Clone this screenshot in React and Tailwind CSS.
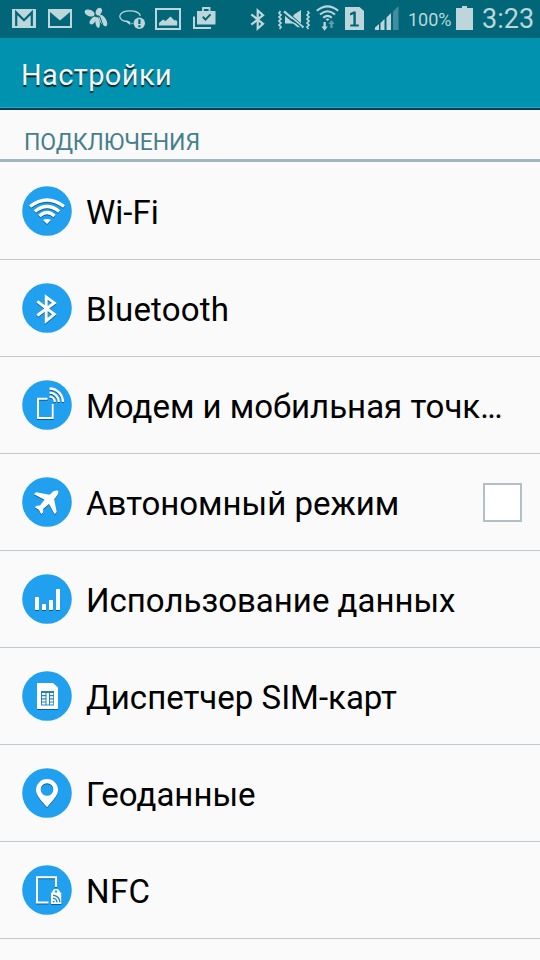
import React from 'react';
import clsx from 'clsx';

const StatusIcon = ({ x, width, className, children }) => (
  <svg
    width={width}
    height="38"
    viewBox={`${x} 0 ${width} 38`}
    fill="#bcd6dc"
    className={clsx('shrink-0', className)}
  >
    {children}
  </svg>
);

const StatusBar = () => (
  <div className="flex h-[38px] items-center overflow-hidden bg-[#006678] pl-3 text-[#bcd6dc]">
    {/* notifications */}
    <StatusIcon x={12} width={24}>
      <path d="M12 9h24v19H12z" />
      <path d="M16.2 26V12.500L24 20.300l7.800-7.800V26" fill="none" stroke="#006678" strokeWidth="2.200" />
    </StatusIcon>
    <StatusIcon x={48} width={24} className="ml-3">
      <path d="M48 9h24v19H48z" />
      <path d="M50 12l10 8.500L70 12v14H50z" fill="#006678" />
    </StatusIcon>
    <StatusIcon x={84} width={24} className="ml-3">
      <ellipse cx="89.6" cy="13" rx="5.2" ry="3.2" transform="rotate(22 89.6 13)" />
      <ellipse cx="98.8" cy="11.6" rx="2.9" ry="4" transform="rotate(25 98.8 11.6)" />
      <ellipse cx="93" cy="20.5" rx="2.4" ry="4.5" transform="rotate(38 93 20.5)" />
      <ellipse cx="97.6" cy="22.500" rx="2.200" ry="5.500" transform="rotate(-8 97.6 22.3)" />
      <ellipse cx="103" cy="20.500" rx="3.200" ry="6.500" transform="rotate(-30 103 20.5)" />
      <path d="M99.500 16l4 11" stroke="#006678" strokeWidth="1" />
    </StatusIcon>
    <StatusIcon x={118} width={28} className="ml-2.5">
      <path
        d="M128 21.5C122 21.3 119.6 18.6 119.8 16c.4-3.2 4.8-5.2 10-5.2 5 0 9.600 1.600 10.600 5"
        fill="none"
        stroke="#bcd6dc"
        strokeWidth="1.3"
      />
      <path d="M124.500 20.500l5 .8 1 1.400-.4 2.300c-1.600-1.300-3.400-2.500-5.600-4.500z" />
      <circle cx="132" cy="23.500" r=".7" />
      <circle cx="139.300" cy="23.200" r="5.700" />
      <path d="M138.300 19.300h2.200v4.700h-2.200zM138.300 25.200h2.200v2h-2.200z" fill="#006678" />
    </StatusIcon>
    <StatusIcon x={155} width={26} className="ml-[9px]">
      <path d="M155 8h26v22h-26zM157 10v18h22V10z" fillRule="evenodd" />
      <path d="M159 25.500v-2.500l4-3.500 2.500 1.500 5-4.500 4 4 1.500-.5 1.200 1.500v4z" />
    </StatusIcon>
    <StatusIcon x={193} width={23} className="ml-3">
      <path d="M193 16.500h2V27h16v2h-18z" />
      <path d="M197 11h18.500v13.500H197z" />
      <path d="M203 11.500V8h6.500v3.500" fill="none" stroke="#bcd6dc" strokeWidth="1.800" />
      <path d="M202.800 16.800l2.700 2.800 5-5.200" fill="none" stroke="#006678" strokeWidth="2" />
    </StatusIcon>

    {/* system */}
    <StatusIcon x={250} width={16} className="ml-[34px]">
      <path
        d="M251.300 14.300L263 23.800l-5.300 4.700V10.500l5.300 4.700-11.700 9.500"
        fill="none"
        stroke="#bcd6dc"
        strokeWidth="2.200"
      />
    </StatusIcon>
    <StatusIcon x={278} width={32} className="ml-3">
      <path
        d="M280.500 11l-1.500 2 2 2-2 2 2 2-2 2 2 2-2 2 2 2-1.500 2M307.500 11l1.500 2-2 2 2 2-2 2 2 2-2 2 2 2-2 2 1.500 2"
        fill="none"
        stroke="#bcd6dc"
        strokeWidth="1.700"
      />
      <path d="M285 14.500l10 9H285zM294 14.500l7-4.500v13.500l-8-7z" />
      <path d="M284.500 12.500l19 16" stroke="#006678" strokeWidth="4.500" />
      <path d="M284 11.300l19.500 16.200" stroke="#bcd6dc" strokeWidth="2.200" />
      <path d="M290 21l7.500 6.300h3.500v-2" />
      <path d="M292 19.500l9.500 8" stroke="#006678" strokeWidth="1.200" />
    </StatusIcon>
    <StatusIcon x={316} width={24} className="ml-1.5">
      <g fill="none" stroke="#bcd6dc" strokeWidth="2.100">
        <path d="M316.800 10.800Q327.500 2 338.200 10.800" />
        <path d="M320 14.500Q327.500 8 335 14.500" />
        <path d="M323.200 17.800Q327.500 14 331.800 17.800" />
      </g>
      <path d="M325.500 19.200q2-1.500 4 0l-2 1.800z" />
      <path d="M323.500 22h2.300v4.500h2l-3.200 4.300-3.200-4.300h2.100z" />
      <path d="M330.300 28h2.400v-4h2l-3.200-4-3.200 4h2z" opacity=".5" />
    </StatusIcon>
    <StatusIcon x={345} width={19} className="ml-[5px]">
      <path d="M345 7h14.500l4.500 4v19h-19z" />
      <path d="M350 13.300l3.500-1.800h2.300v13h3v2h-8.500v-2h3.100V14.300l-3.400 1.200z" fill="#006678" />
    </StatusIcon>
    <StatusIcon x={375} width={24} className="ml-[11px]">
      <path d="M375 30v-2.500l4-3.500v6zM380.500 30v-7l4-4v11zM386.500 30V17.500l4.500-4.500v17z" />
      <path d="M393 30V11.500l5.500-5.500v24z" opacity=".35" />
    </StatusIcon>
    <span className="ml-[9px] w-[44px] whitespace-nowrap pt-0.5 font-[Roboto] text-[18px] leading-[38px]">100%</span>
    <StatusIcon x={456} width={17} className="ml-1">
      <path d="M462 6h5v2h6v22h-17V8h6z" />
    </StatusIcon>
    <span className="ml-[9px] whitespace-nowrap font-[Roboto] text-[27px] leading-[38px]">3:23</span>
  </div>
);

const WifiIcon = () => (
  <>
    <g fill="none" stroke="#fff" strokeWidth="3.200">
      <path d="M8 20.500Q25 7.500 42 20.500" />
      <path d="M12.800 25.500Q25 15.500 37.200 25.500" />
      <path d="M17.500 30Q25 23 32.500 30" />
    </g>
    <path d="M21 34q4-2.200 8 0l-4 4z" fill="#fff" />
  </>
);

const BluetoothIcon = () => (
  <path
    d="M15.300 18.300L32.300 31.300 24.200 38V14L32.300 19.900 15.300 32.500"
    fill="none"
    stroke="#fff"
    strokeWidth="2.900"
  />
);

const TetherIcon = () => (
  <g fill="none" stroke="#fff">
    <path d="M25.500 18.700H16V38h14.700V24" strokeWidth="2" />
    <path d="M27.500 16.700a5.200 5.200 0 0 1 5.200 5.200M27.500 12.600a9.300 9.300 0 0 1 9.300 9.300M27.500 8.500a13.400 13.400 0 0 1 13.400 13.400" strokeWidth="2.300" />
  </g>
);

const PlaneIcon = () => (
  <path
    d="M36 13.800C34.500 13.200 31.500 14 29.500 16l-2 1.800L14 15.300 12 17.300l10.500 5.500L18 28.500l-3.500.3-1.700 1.500 4 2.500 2.500 4.500 1.700-1.800.3-3.700L27 27l5.700 10.200 2-2.200-2.500-12.700L34 20C36 18 37 15.500 36 13.800z"
    fill="#fff"
  />
);

const DataIcon = () => (
  <path d="M13 23h4v13h-4zM20 30h4v6h-4zM27 26h4v10h-4zM34 15h4v21h-4z" fill="#fff" />
);

const SimIcon = () => (
  <>
    <path d="M15 12h16l5 4.500V38H15z" fill="#fff" />
    <path d="M19 20h13v14.500H19z" fill="#2382bd" />
    <path
      d="M20 22h3.500v2H20zM20 25.300h3.500v2H20zM20 28.500h3.500v2H20zM20 31.500h3.500v2H20zM24.500 22h2.500v11.500h-2.500zM28 22h3.300v2H28zM28 25.300h3.300v2H28zM28 28.500h3.300v2H28zM28 31.500h3.300v2H28z"
      fill="#fff"
    />
  </>
);

const LocationIcon = () => (
  <path
    d="M25 11a11 11 0 0 0-11 11c0 6 6 11 11 17.300C30 33 36 28 36 22a11 11 0 0 0-11-11zm0 4.200a6.300 6.300 0 1 1 0 12.600 6.300 6.300 0 0 1 0-12.600z"
    fillRule="evenodd"
    fill="#fff"
  />
);

const NfcIcon = () => (
  <>
    <path d="M34 22V12.200H15v25.200h11.500" fill="none" stroke="#fff" strokeWidth="2" />
    <path d="M29 28.500l3-4.500h4l3.300 4.500V39H29z" fill="#fff" />
    <circle cx="34" cy="26.500" r="1.200" fill="#20a0ee" />
    <path
      d="M31 30.200a7 7 0 0 1 6.800 7M31 33.200a4 4 0 0 1 3.900 4"
      fill="none"
      stroke="#2382bd"
      strokeWidth="1.500"
    />
    <circle cx="31.700" cy="36.600" r=".9" fill="#2382bd" />
  </>
);

const menuItems = [
  { label: 'Wi-Fi', icon: WifiIcon },
  { label: 'Bluetooth', icon: BluetoothIcon, className: 'tracking-[0.2px]' },
  { label: 'Модем и мобильная точк', icon: TetherIcon, truncated: true },
  { label: 'Автономный режим', icon: PlaneIcon, checkbox: true },
  { label: 'Использование данных', icon: DataIcon },
  { label: 'Диспетчер SIM-карт', icon: SimIcon },
  { label: 'Геоданные', icon: LocationIcon },
  { label: 'NFC', icon: NfcIcon, className: 'tracking-[0.4px]' }
];

const App = () => {
  return (
    <div className="flex h-[960px] w-[540px] flex-col overflow-hidden bg-[#fafafa] font-[Roboto,sans-serif]">
      <StatusBar />

      <header className="flex h-[72px] shrink-0 items-center border-b-2 border-[#003c52] bg-[#0092af] pl-[21px] shadow-[inset_0_-1px_0_#25a3bc]">
        <h1 className="pt-[4px] text-[29px] leading-none tracking-[0.4px] text-[#f5f5f5] [text-shadow:0_1.5px_1px_rgba(0,0,0,0.75)]">
          Настройки
        </h1>
      </header>

      <h2 className="mb-px h-[52px] shrink-0 border-b-[3px] border-[#9fb8c0] pl-6 pt-[19px] text-[23px] leading-[28px] tracking-[-0.1px] text-[#467f8c]">
        ПОДКЛЮЧЕНИЯ
      </h2>

      <ul>
        {menuItems.map((item) => {
          const Icon = item.icon;

          return (
            <li
              key={item.label}
              className="flex h-[97px] items-center border-b border-[#bfc9d0] pl-[22px] pr-[18px]"
            >
              <svg width="50" height="50" viewBox="0 0 50 50" className="shrink-0">
                <circle cx="25" cy="25" r="24.800" fill="#20a0ee" />
                <g className="drop-shadow-[0_1px_0.5px_rgba(0,50,90,0.6)]">
                  <Icon />
                </g>
              </svg>
              <span
                className={clsx(
                  'ml-[14px] flex-1 whitespace-nowrap pt-[3px] text-[33px] leading-[40px] text-black',
                  item.className
                )}
              >
                {item.label}
                {item.truncated && <span className="tracking-[-1.7px]">...</span>}
              </span>
              {item.checkbox && (
                <span className="h-[39px] w-[39px] shrink-0 border-2 border-[#b0c0c5] bg-white" />
              )}
            </li>
          );
        })}
      </ul>
    </div>
  );
};

export default App;
